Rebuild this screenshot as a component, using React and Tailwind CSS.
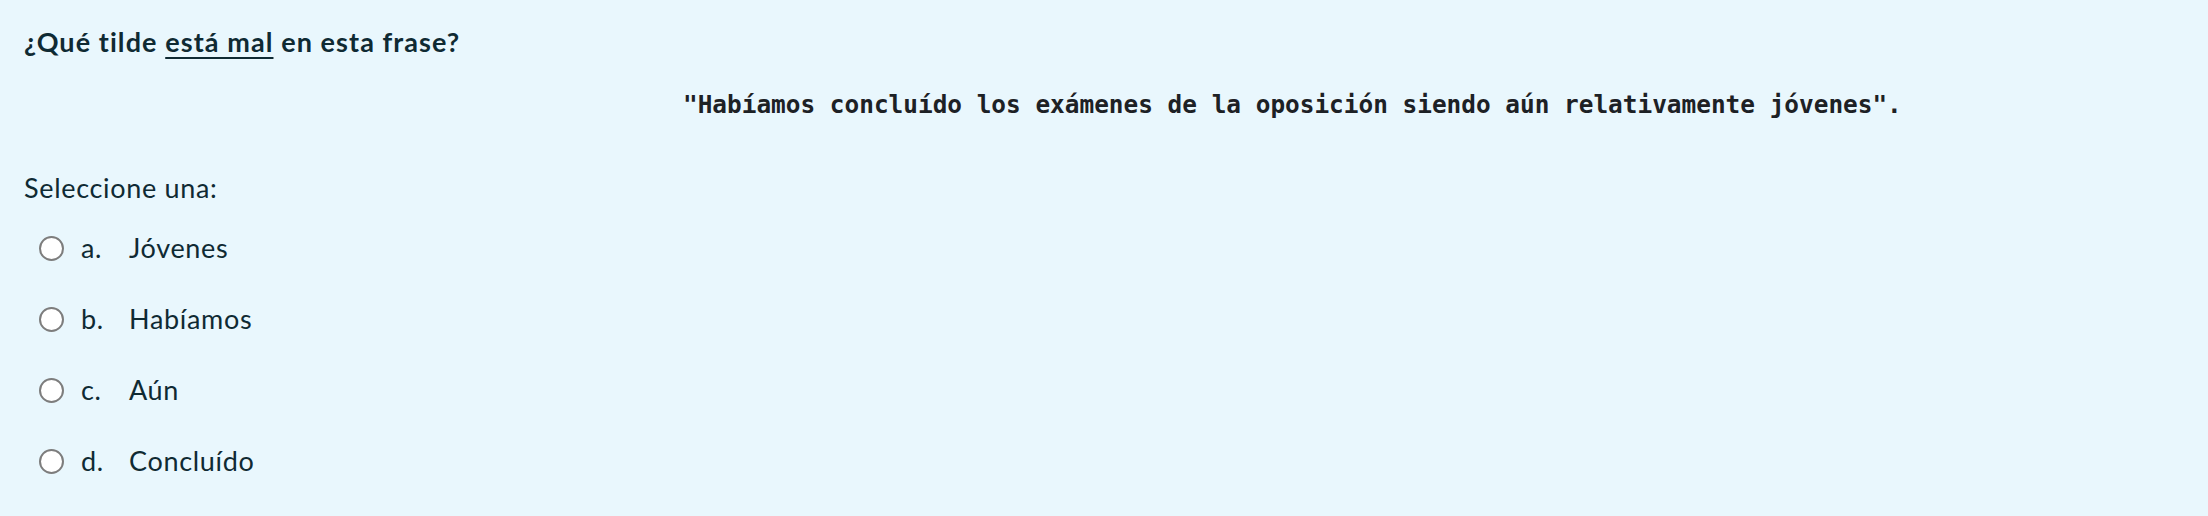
const options = [
  { letter: "a.", text: "Jóvenes" },
  { letter: "b.", text: "Habíamos" },
  { letter: "c.", text: "Aún" },
  { letter: "d.", text: "Concluído" },
];

export default function App() {
  return (
    <div
      className="w-full min-h-screen bg-[#e9f7fd] text-[#0f2a33] pl-[24px] pt-[24px]"
      style={{ fontFamily: "Lato, 'Noto Sans', sans-serif" }}
    >
      {/* Question text */}
      <p className="text-[27px] font-bold leading-[36px] tracking-[0.04em]">
        ¿Qué tilde{" "}
        <span className="underline decoration-2 underline-offset-[5px]">está mal</span>{" "}
        en esta frase?
      </p>

      <p
        className="mt-[27px] pl-[659px] text-[24.4px] font-bold leading-[36px] text-[#1d2125] whitespace-nowrap"
        style={{ fontFamily: "'DejaVu Sans Mono', monospace" }}
      >
        "Habíamos concluído los exámenes de la oposición siendo aún relativamente jóvenes".
      </p>

      <p className="mt-[47px] text-[27px] leading-[36px] tracking-[0.025em]">Seleccione una:</p>

      {/* Answers */}
      <div className="mt-[7px] flex flex-col">
        {options.map((o) => (
          <label
            key={o.letter}
            className="h-[71px] flex items-center pl-[15px] text-[27px] tracking-[0.025em]"
          >
            <span className="w-[25px] h-[25px] rounded-full border-2 border-[#7d7d7d] bg-white shrink-0" />
            <span className="ml-[17px] w-[48px]">{o.letter}</span>
            <span>{o.text}</span>
          </label>
        ))}
      </div>
    </div>
  );
}
